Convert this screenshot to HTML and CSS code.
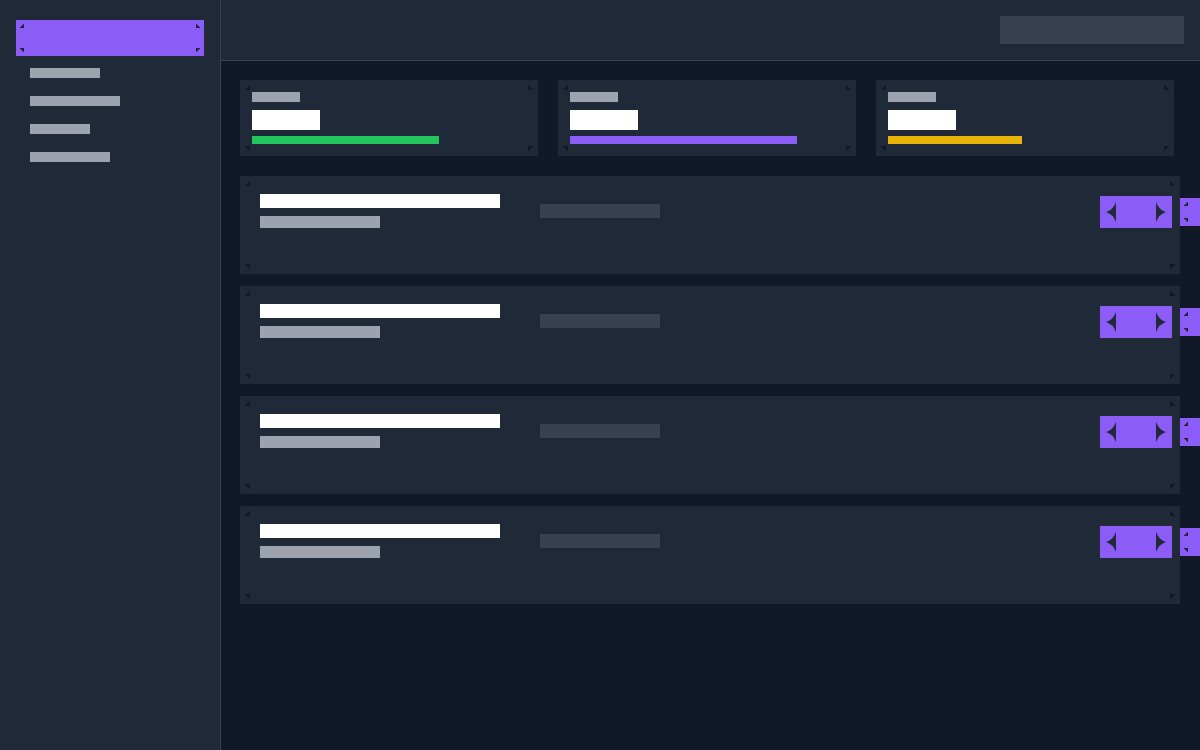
FILE: index.html
```html
<!DOCTYPE html>
<html>
<head>
<meta charset="utf-8">
<link rel="stylesheet" href="styles.css">
</head>
<body>
<div class="app">
  <aside class="sidebar">
    <div class="brand marked sm"><span class="c tl"></span><span class="c tr"></span><span class="c bl"></span><span class="c br"></span></div>
    <nav class="nav">
      <div class="nav-item w70"></div>
      <div class="nav-item w90"></div>
      <div class="nav-item w60"></div>
      <div class="nav-item w80"></div>
    </nav>
  </aside>
  <main class="main">
    <header class="header"><div class="search"></div></header>
    <section class="content">
      <div class="stats">
        <div class="stat marked"><span class="c tl"></span><span class="c tr"></span><span class="c bl"></span><span class="c br"></span>
          <div class="stat-label"></div><div class="stat-value"></div>
          <div class="stat-bar green" style="width:187px"></div>
        </div>
        <div class="stat marked"><span class="c tl"></span><span class="c tr"></span><span class="c bl"></span><span class="c br"></span>
          <div class="stat-label"></div><div class="stat-value"></div>
          <div class="stat-bar purple" style="width:227px"></div>
        </div>
        <div class="stat marked"><span class="c tl"></span><span class="c tr"></span><span class="c bl"></span><span class="c br"></span>
          <div class="stat-label"></div><div class="stat-value"></div>
          <div class="stat-bar yellow" style="width:134px"></div>
        </div>
      </div>
      <div class="rows">
        <div class="row marked"><span class="c tl"></span><span class="c tr"></span><span class="c bl"></span><span class="c br"></span>
          <div class="info"><div class="title"></div><div class="sub"></div></div>
          <div class="meta"></div>
          <div class="actions">
            <div class="pager"><svg width="10" height="20" viewBox="0 0 10 20"><path d="M10 0V20Q7 12 0 10Q7 8 10 0Z"/></svg><svg width="10" height="20" viewBox="0 0 10 20"><path d="M0 0V20Q3 12 10 10Q3 8 0 0Z"/></svg></div>
            <div class="extra marked sm"><span class="c tl"></span><span class="c bl"></span></div>
          </div>
        </div>
        <div class="row marked"><span class="c tl"></span><span class="c tr"></span><span class="c bl"></span><span class="c br"></span>
          <div class="info"><div class="title"></div><div class="sub"></div></div>
          <div class="meta"></div>
          <div class="actions">
            <div class="pager"><svg width="10" height="20" viewBox="0 0 10 20"><path d="M10 0V20Q7 12 0 10Q7 8 10 0Z"/></svg><svg width="10" height="20" viewBox="0 0 10 20"><path d="M0 0V20Q3 12 10 10Q3 8 0 0Z"/></svg></div>
            <div class="extra marked sm"><span class="c tl"></span><span class="c bl"></span></div>
          </div>
        </div>
        <div class="row marked"><span class="c tl"></span><span class="c tr"></span><span class="c bl"></span><span class="c br"></span>
          <div class="info"><div class="title"></div><div class="sub"></div></div>
          <div class="meta"></div>
          <div class="actions">
            <div class="pager"><svg width="10" height="20" viewBox="0 0 10 20"><path d="M10 0V20Q7 12 0 10Q7 8 10 0Z"/></svg><svg width="10" height="20" viewBox="0 0 10 20"><path d="M0 0V20Q3 12 10 10Q3 8 0 0Z"/></svg></div>
            <div class="extra marked sm"><span class="c tl"></span><span class="c bl"></span></div>
          </div>
        </div>
        <div class="row marked"><span class="c tl"></span><span class="c tr"></span><span class="c bl"></span><span class="c br"></span>
          <div class="info"><div class="title"></div><div class="sub"></div></div>
          <div class="meta"></div>
          <div class="actions">
            <div class="pager"><svg width="10" height="20" viewBox="0 0 10 20"><path d="M10 0V20Q7 12 0 10Q7 8 10 0Z"/></svg><svg width="10" height="20" viewBox="0 0 10 20"><path d="M0 0V20Q3 12 10 10Q3 8 0 0Z"/></svg></div>
            <div class="extra marked sm"><span class="c tl"></span><span class="c bl"></span></div>
          </div>
        </div>
      </div>
    </section>
  </main>
</div>
</body>
</html>
```
FILE: styles.css
```css
* { box-sizing: border-box; }
html, body { margin: 0; padding: 0; overflow: hidden; }
body {
  width: 1200px; height: 750px;
  background: #111827;
  font-family: "Inter", "Liberation Sans", sans-serif;
}
.app { display: flex; height: 750px; }

.sidebar {
  width: 221px; flex-shrink: 0;
  background: #1f2937;
  border-right: 1px solid #374151;
  padding: 20px 16px;
}
.brand { width: 188px; height: 36px; background: #8b5cf6; }
.nav { display: flex; flex-direction: column; gap: 18px; padding: 12px 0 0 14px; }
.nav-item { height: 10px; background: #9ca3af; }
.w70 { width: 70px; } .w90 { width: 90px; } .w60 { width: 60px; } .w80 { width: 80px; }

.main { flex: 1; display: flex; flex-direction: column; min-width: 0; }
.header {
  height: 61px; background: #1f2937;
  border-bottom: 1px solid #374151;
  display: flex; justify-content: flex-end; align-items: flex-start;
  padding: 16px 16px 0 0;
}
.search { width: 184px; height: 28px; background: #374151; }

.content { padding: 19px 20px 20px 19px; }
.stats { display: grid; grid-template-columns: repeat(3, 298px); gap: 20px; }
.stat { background: #1f2937; height: 76px; padding: 12px; }
.stat-label { width: 48px; height: 10px; background: #9ca3af; }
.stat-value { width: 68px; height: 20px; background: #ffffff; margin-top: 8px; }
.stat-bar { height: 8px; margin-top: 6px; }
.green { background: #22c55e; }
.purple { background: #8b5cf6; }
.yellow { background: #eab308; }

.rows { display: flex; flex-direction: column; gap: 12px; margin-top: 20px; }
.row {
  background: #1f2937; height: 98px;
  padding: 18px 0 0 20px;
  display: flex; align-items: flex-start;
}
.info { width: 240px; flex-shrink: 0; }
.title { width: 240px; height: 14px; background: #ffffff; }
.sub { width: 120px; height: 12px; background: #9ca3af; margin-top: 8px; }
.meta { width: 120px; height: 14px; background: #374151; margin: 10px 0 0 40px; flex-shrink: 0; }
.actions { margin-left: auto; margin-top: 2px; display: flex; align-items: flex-start; gap: 8px; }
.pager {
  width: 72px; height: 32px; background: #8b5cf6;
  display: flex; justify-content: space-between; align-items: center;
  padding: 0 6px;
}
.pager svg { display: block; fill: #1f2937; }
.extra { width: 40px; height: 28px; background: #8b5cf6; margin-top: 2px; margin-right: -40px; flex-shrink: 0; }

/* corner marks */
.marked { position: relative; }
.c { position: absolute; width: 5px; height: 5px; border: 0 solid #111827; }
.c.tl { top: 5px; left: 5px; border-right-width: 1px; border-bottom-width: 1px;
  background: linear-gradient(135deg, transparent 55%, #111827 55%); }
.c.tr { top: 5px; right: 5px; border-left-width: 1px; border-bottom-width: 1px;
  background: linear-gradient(225deg, transparent 55%, #111827 55%); }
.c.bl { bottom: 5px; left: 5px; border-right-width: 1px; border-top-width: 1px;
  background: linear-gradient(45deg, transparent 55%, #111827 55%); }
.c.br { bottom: 5px; right: 5px; border-left-width: 1px; border-top-width: 1px;
  background: linear-gradient(315deg, transparent 55%, #111827 55%); }
.sm .c { width: 4px; height: 4px; border-color: #1f2937; }
.sm .c.tl { top: 4px; left: 4px; background: linear-gradient(135deg, transparent 55%, #1f2937 55%); }
.sm .c.tr { top: 4px; right: 4px; background: linear-gradient(225deg, transparent 55%, #1f2937 55%); }
.sm .c.bl { bottom: 4px; left: 4px; background: linear-gradient(45deg, transparent 55%, #1f2937 55%); }
.sm .c.br { bottom: 4px; right: 4px; background: linear-gradient(315deg, transparent 55%, #1f2937 55%); }
```
